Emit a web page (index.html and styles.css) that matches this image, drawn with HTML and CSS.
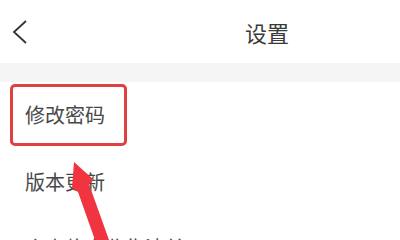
FILE: index.html
```html
<!DOCTYPE html>
<html lang="zh-CN">
<head>
    <meta charset="UTF-8">
    <meta name="viewport" content="width=device-width, initial-scale=1.0">
    <title>设置</title>
    <link rel="stylesheet" href="styles.css">
</head>
<body>
    <header class="topbar">
        <svg class="back" width="16" height="26" viewBox="0 0 16 26">
            <polyline points="14,2 2,13 14,24" fill="none" stroke="#333" stroke-width="1.8"/>
        </svg>
        <h1 class="title">设置</h1>
    </header>

    <div class="gap"></div>

    <main class="list">
        <div class="row row-marked">
            <span class="mark">修改密码</span>
        </div>
        <div class="row">版本更新</div>
        <div class="row">个人信息收集清单</div>
    </main>

    <!-- annotation arrow -->
    <svg class="arrow" width="400" height="240" viewBox="0 0 400 240">
        <polygon points="74,162 94,180 89,184 109,240 95,240 78,192 72,188" fill="#f03440"/>
    </svg>
</body>
</html>
```

FILE: styles.css
```css
body {
    margin: 0;
    background-color: #fff;
    color: #484848;
    font-family: "Noto Sans CJK SC", "Noto Sans", sans-serif;
    overflow: hidden;
}
.topbar {
    height: 63px;
    display: flex;
    align-items: center;
    padding-left: 12px;
}
.back {
    display: block;
}
.title {
    margin: 0 0 0 217px;
    font-size: 22px;
    font-weight: normal;
    color: #3a3a3a;
}
.gap {
    height: 19px;
    background-color: #f5f5f5;
}
.row {
    height: 66px;
    display: flex;
    align-items: center;
    padding-left: 25px;
    font-size: 20px;
}
.row-marked {
    padding-left: 10px;
}
.mark {
    display: inline-block;
    border: 3px solid #e0403f;
    border-radius: 5px;
    padding: 18px 19px 18px 12px;
    line-height: 20px;
}
.arrow {
    position: absolute;
    top: 0;
    left: 0;
}
```
